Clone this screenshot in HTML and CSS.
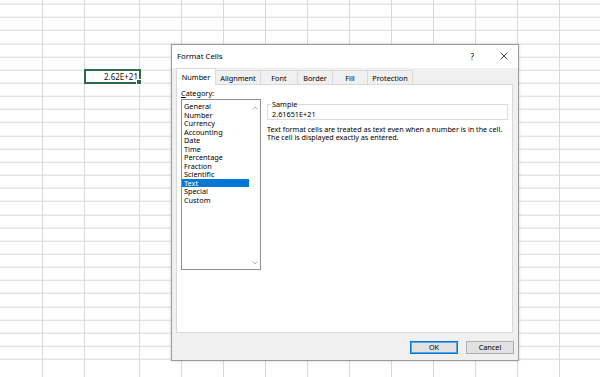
FILE: index.html
```html
<!DOCTYPE html>
<html>
<head>
<meta charset="utf-8">
<link rel="stylesheet" href="styles.css">
</head>
<body>
<div class="sheet">
  <div class="col w43"></div>
  <div class="col w42"></div>
  <div class="col w55">
    <div class="selected">2.62E+21<span class="handle"></span></div>
  </div>
  <div class="col w42"></div>
  <div class="col w42"></div>
  <div class="col w42"></div>
  <div class="col w42"></div>
  <div class="col w42"></div>
  <div class="col w42"></div>
  <div class="col w42"></div>
  <div class="col w42"></div>
  <div class="col w42"></div>
  <div class="col w42"></div>
  <div class="col w42"></div>
</div>

<div class="dialog">
  <div class="titlebar">
    <span class="title">Format Cells</span>
    <span class="help">?</span>
    <svg class="close" width="8" height="8" viewBox="0 0 8 8"><path d="M0.5 0.5 L7.5 7.5 M7.5 0.5 L0.5 7.5" stroke="#333" stroke-width="0.9" fill="none"/></svg>
  </div>
  <div class="tabs">
    <div class="tab active t-number">Number</div>
    <div class="tab t-align">Alignment</div>
    <div class="tab t-font">Font</div>
    <div class="tab t-border">Border</div>
    <div class="tab t-fill">Fill</div>
    <div class="tab t-prot">Protection</div>
  </div>
  <div class="panel">
    <div class="left">
      <div class="label"><u>C</u>ategory:</div>
      <div class="listbox">
        <ul class="items">
          <li>General</li>
          <li>Number</li>
          <li>Currency</li>
          <li>Accounting</li>
          <li>Date</li>
          <li>Time</li>
          <li>Percentage</li>
          <li>Fraction</li>
          <li>Scientific</li>
          <li class="sel">Text</li>
          <li>Special</li>
          <li>Custom</li>
        </ul>
        <div class="scroll">
          <svg width="6" height="4" viewBox="0 0 6 4"><path d="M0.5 3.5 L3 1 L5.5 3.5" stroke="#a6a6a6" stroke-width="0.9" fill="none"/></svg>
          <svg width="6" height="4" viewBox="0 0 6 4"><path d="M0.5 0.5 L3 3 L5.5 0.5" stroke="#a6a6a6" stroke-width="0.9" fill="none"/></svg>
        </div>
      </div>
    </div>
    <div class="right">
      <fieldset class="sample">
        <legend>Sample</legend>
        <div class="value">2.61651E+21</div>
      </fieldset>
      <div class="desc">
        <div class="line">Text format cells are treated as text even when a number is in the cell.</div>
        <div class="line">The cell is displayed exactly as entered.</div>
      </div>
    </div>
  </div>
  <div class="footer">
    <button class="btn ok">OK</button>
    <button class="btn">Cancel</button>
  </div>
</div>
</body>
</html>
```
FILE: styles.css
```css
html, body {
  margin: 0;
  padding: 0;
  background: #ffffff;
  overflow: hidden;
}
body {
  width: 600px;
  height: 377px;
  position: relative;
  font-family: "Noto Sans", "DejaVu Sans", sans-serif;
}
.sheet {
  display: flex;
  height: 377px;
  background-image: repeating-linear-gradient(to bottom, transparent 0, transparent 12.15px, #d9d9d9 12.15px, #d9d9d9 13.15px);
  background-position: 0 -8.3px;
}
.col {
  flex: none;
  height: 100%;
  box-sizing: border-box;
  border-right: 1px solid #d9d9d9;
}
.w43 { width: 43px; }
.w42 { width: 42px; }
.w55 { width: 55px; }
.selected {
  position: relative;
  box-sizing: border-box;
  margin: 69px 0 0 -1px;
  width: 57px;
  height: 15px;
  border: 2px solid #2b6a48;
  background: #fff;
  font-size: 8px;
  line-height: 11px;
  text-align: right;
  padding-right: 1px;
  color: #111;
}
.handle {
  position: absolute;
  right: -3px;
  bottom: -3px;
  width: 4px;
  height: 4px;
  background: #2b6a48;
  border: 1px solid #fff;
}
.dialog {
  position: absolute;
  left: 171px;
  top: 44px;
  width: 348px;
  height: 317px;
  box-sizing: border-box;
  border: 1px solid #9b9b9b;
  background: #f0f0f0;
  box-shadow: 0 0 3px rgba(0,0,0,0.18);
  display: flex;
  flex-direction: column;
  font-size: 7.3px;
  color: #000;
}
.titlebar {
  height: 23px;
  flex: none;
  background: #ffffff;
  display: flex;
  align-items: center;
  padding: 0 0 0 5px;
}
.title {
  font-size: 7.8px;
  flex: 1;
  margin-top: -1px;
}
.help {
  font-size: 8px;
  margin-right: 26px;
  margin-top: -1px;
}
.close {
  margin-right: 10px;
  margin-top: -1px;
}
.tabs {
  display: flex;
  height: 16px;
  flex: none;
  padding-left: 4px;
  align-items: flex-end;
  position: relative;
  z-index: 1;
}
.tab {
  box-sizing: border-box;
  height: 14px;
  border: 1px solid #d9d9d9;
  border-bottom: none;
  border-left: none;
  background: #f0f0f0;
  display: flex;
  align-items: center;
  justify-content: center;
}
.tab.active {
  height: 17px;
  background: #ffffff;
  border-left: 1px solid #d9d9d9;
  margin-bottom: -1px;
}
.t-number { width: 40px; }
.t-align { width: 45px; }
.t-font { width: 37px; }
.t-border { width: 35px; }
.t-fill { width: 35px; }
.t-prot { width: 45px; }
.panel {
  flex: none;
  height: 249px;
  margin: 0 5px 0 4px;
  background: #ffffff;
  border: 1px solid #d9d9d9;
  box-sizing: border-box;
  display: flex;
  padding: 0 4px 0 4px;
  gap: 6px;
}
.left {
  width: 80px;
  flex: none;
  display: flex;
  flex-direction: column;
}
.label {
  height: 14px;
  line-height: 14px;
  padding-top: 1px;
  box-sizing: border-box;
}
.listbox {
  height: 171px;
  box-sizing: border-box;
  border: 1px solid #8f8f8f;
  display: flex;
}
.items {
  list-style: none;
  margin: 0;
  padding: 2px 0 0 0;
  flex: 1;
}
.items li {
  height: 8.5px;
  line-height: 8.5px;
  padding-left: 2px;
  white-space: nowrap;
}
.items li.sel {
  background: #0078d7;
  color: #ffffff;
}
.scroll {
  width: 11px;
  flex: none;
  display: flex;
  flex-direction: column;
  justify-content: space-between;
  align-items: center;
  padding: 6px 0 4px 0;
}
.right {
  flex: 1;
  padding-top: 15px;
}
.sample {
  margin: 0;
  padding: 0 4px 3px 4px;
  border: 1px solid #dcdcdc;
  height: 20px;
  box-sizing: border-box;
}
.sample legend {
  padding: 0 1px;
  margin-left: -1px;
  line-height: 9px;
  font-size: 7.3px;
}
.value {
  line-height: 9px;
  padding-top: 1px;
}
.desc {
  margin-top: 5px;
  display: flex;
  flex-direction: column;
}
.desc .line {
  height: 8px;
  line-height: 8px;
  font-size: 7.2px;
  white-space: nowrap;
}
.footer {
  flex: 1;
  display: flex;
  justify-content: flex-end;
  align-items: center;
  gap: 8px;
  padding: 1px 4px 0 0;
}
.btn {
  width: 48px;
  height: 13px;
  box-sizing: border-box;
  background: #e1e1e1;
  border: 1px solid #adadad;
  font-family: "Noto Sans", "DejaVu Sans", sans-serif;
  font-size: 7.3px;
  color: #000;
  padding: 0;
  line-height: 11px;
}
.btn.ok {
  border: 1px solid #0078d7;
  box-shadow: inset 0 0 0 1px #5aa3e0;
}
```
